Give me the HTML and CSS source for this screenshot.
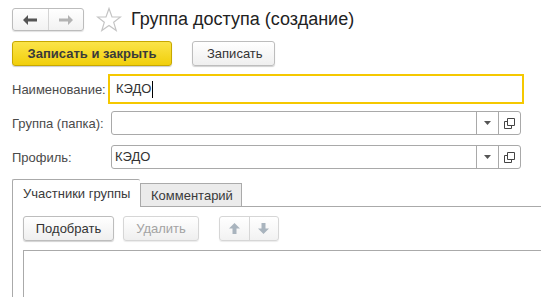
FILE: index.html
```html
<!DOCTYPE html>
<html lang="ru">
<head>
<meta charset="utf-8">
<title>Группа доступа (создание)</title>
<link rel="stylesheet" href="styles.css">
</head>
<body>
<div class="page">
  <div class="header">
    <div class="nav">
      <span class="nav-btn">
        <svg width="14" height="10" viewBox="0 0 14 10"><path d="M0 5 L5 0 L5 3.5 L14 3.5 L14 6.5 L5 6.5 L5 10 Z" fill="#555"/></svg>
      </span>
      <span class="nav-btn">
        <svg width="14" height="10" viewBox="0 0 14 10"><path d="M14 5 L9 0 L9 3.5 L0 3.5 L0 6.5 L9 6.5 L9 10 Z" fill="#b3b3b3"/></svg>
      </span>
    </div>
    <svg class="star" width="26" height="25" viewBox="0 0 26 25"><path d="M13 1.5 L16 10 L24.5 10 L17.7 15.3 L20.2 23.5 L13 18.5 L5.8 23.5 L8.3 15.3 L1.5 10 L10 10 Z" fill="none" stroke="#c4c4c4" stroke-width="1.2" stroke-linejoin="miter"/></svg>
    <h1 class="title">Группа доступа (создание)</h1>
  </div>

  <div class="toolbar">
    <button class="btn btn-default">Записать и закрыть</button>
    <button class="btn btn-plain">Записать</button>
  </div>

  <div class="form">
    <div class="row">
      <span class="label">Наименование:</span>
      <div class="field focused"><span class="value">КЭДО</span><span class="caret"></span></div>
    </div>
    <div class="row">
      <span class="label">Группа (папка):</span>
      <div class="field">
        <span class="value"></span>
        <span class="cell"><svg width="7" height="4" viewBox="0 0 7 4"><path d="M0 0 H7 L3.5 4 Z" fill="#555"/></svg></span>
        <span class="cell"><svg width="11" height="11" viewBox="0 0 11 11"><path d="M3.5 0.5 H10.5 V7.5 H3.5 Z" fill="none" stroke="#444"/><path d="M3.5 3.5 H0.5 V10.5 H7.5 V7.5" fill="none" stroke="#444"/></svg></span>
      </div>
    </div>
    <div class="row">
      <span class="label">Профиль:</span>
      <div class="field">
        <span class="value">КЭДО</span>
        <span class="cell"><svg width="7" height="4" viewBox="0 0 7 4"><path d="M0 0 H7 L3.5 4 Z" fill="#555"/></svg></span>
        <span class="cell"><svg width="11" height="11" viewBox="0 0 11 11"><path d="M3.5 0.5 H10.5 V7.5 H3.5 Z" fill="none" stroke="#444"/><path d="M3.5 3.5 H0.5 V10.5 H7.5 V7.5" fill="none" stroke="#444"/></svg></span>
      </div>
    </div>
  </div>

  <div class="tabs">
    <div class="tab active">Участники группы</div>
    <div class="tab">Комментарий</div>
    <div class="tab-rest"></div>
  </div>
  <div class="panel">
    <div class="panel-bar">
      <button class="btn btn-plain small">Подобрать</button>
      <button class="btn btn-plain small disabled">Удалить</button>
      <div class="arrows">
        <span class="arrow-btn"><svg width="11" height="11" viewBox="0 0 11 11"><path d="M5.5 0 L11 5.5 L7.5 5.5 L7.5 11 L3.5 11 L3.5 5.5 L0 5.5 Z" fill="#a9b4be"/></svg></span>
        <span class="arrow-btn"><svg width="11" height="11" viewBox="0 0 11 11"><path d="M5.5 11 L11 5.5 L7.5 5.5 L7.5 0 L3.5 0 L3.5 5.5 L0 5.5 Z" fill="#a9b4be"/></svg></span>
      </div>
    </div>
    <div class="table"></div>
  </div>
</div>
</body>
</html>
```

FILE: styles.css
```css
html, body {
  margin: 0;
  padding: 0;
  overflow: hidden;
  background: #fff;
}
body {
  font-family: "Liberation Sans", Arial, sans-serif;
  font-size: 13px;
  color: #333;
  width: 541px;
  height: 297px;
}
.page {
  padding: 8px 0 0 12px;
  display: flex;
  flex-direction: column;
  box-sizing: border-box;
  height: 297px;
}
.header {
  display: flex;
  align-items: center;
  height: 23px;
}
.nav {
  display: flex;
  width: 72px;
  height: 23px;
  box-sizing: border-box;
  border: 1px solid #bcbcbc;
  border-radius: 3px;
  background: linear-gradient(#ffffff, #f2f2f2);
  box-shadow: 0 1px 1px rgba(0,0,0,0.12);
}
.nav-btn {
  flex: 1;
  display: flex;
  align-items: center;
  justify-content: center;
}
.nav-btn + .nav-btn {
  border-left: 1px solid #d4d4d4;
}
.star {
  margin-left: 12px;
}
.title {
  margin: 0 0 0 9px;
  font-weight: normal;
  font-size: 18px;
  color: #222;
  line-height: 23px;
}
.toolbar {
  display: flex;
  gap: 20px;
  margin-top: 10px;
}
.btn {
  font-family: "Liberation Sans", Arial, sans-serif;
  font-size: 13px;
  height: 25px;
  box-sizing: border-box;
  border-radius: 3px;
  padding: 0 14px;
  color: #333;
  cursor: default;
  white-space: nowrap;
}
.btn-default {
  width: 160px;
  font-weight: bold;
  color: #3a3a3a;
  border: 1px solid #c7a800;
  background: linear-gradient(#fbe449, #f1cf0b);
  box-shadow: 0 1px 1px rgba(0,0,0,0.2);
}
.btn-plain {
  width: 83px;
  border: 1px solid #bdbdbd;
  background: linear-gradient(#ffffff, #efefef);
  box-shadow: 0 1px 1px rgba(0,0,0,0.18);
}
.form {
  display: flex;
  flex-direction: column;
  gap: 10px;
  margin-top: 11px;
}
.row {
  display: flex;
  align-items: center;
  height: 24px;
}
.label {
  width: 99px;
  color: #4a4a4a;
  white-space: nowrap;
}
.field {
  width: 410px;
  height: 24px;
  box-sizing: border-box;
  border: 1px solid #a9a9a9;
  border-radius: 3px;
  display: flex;
  align-items: stretch;
  background: #fff;
}
.field.focused {
  width: 416px;
  height: 30px;
  margin: -3px 0 -3px -3px;
  border: 2px solid #f5c800;
  border-radius: 0;
  padding-left: 3px;
}
.value {
  flex: 1;
  padding-left: 3px;
  line-height: 22px;
  color: #333;
}
.focused .value {
  flex: 0 0 auto;
  line-height: 26px;
}
.caret {
  width: 1px;
  height: 17px;
  background: #000;
  align-self: center;
  margin-left: 1px;
}
.cell {
  width: 21px;
  border-left: 1px solid #a9a9a9;
  display: flex;
  align-items: center;
  justify-content: center;
}
.tabs {
  display: flex;
  align-items: flex-end;
  margin-top: 10px;
  height: 28px;
}
.tab {
  box-sizing: border-box;
  border: 1px solid #aaaaaa;
  border-bottom: none;
  padding: 0 10px;
  display: flex;
  align-items: center;
  color: #3a3a3a;
  white-space: nowrap;
}
.tab.active {
  height: 28px;
  width: 128px;
  border-radius: 2px 2px 0 0;
  background: #fff;
  border-right: none;
  padding: 0 0 0 10px;
}
.tab:not(.active) {
  height: 24px;
  width: 102px;
  background: #ebebeb;
  border-bottom: 1px solid #aaaaaa;
}
.tab-rest {
  flex: 1;
  border-bottom: 1px solid #aaaaaa;
  height: 0;
}
.panel {
  flex: 1;
  display: flex;
  flex-direction: column;
  border-left: 1px solid #aaaaaa;
  padding: 9px 0 0 10px;
  min-height: 0;
}
.panel-bar {
  display: flex;
  align-items: center;
}
.btn.small {
  height: 25px;
  padding: 0;
}
.btn.small:first-child {
  width: 91px;
  margin-right: 9px;
}
.btn.disabled {
  width: 76px;
  color: #a3a3a3;
  border-color: #d6d6d6;
  box-shadow: 0 1px 1px rgba(0,0,0,0.08);
}
.arrows {
  margin-left: 20px;
  display: flex;
  width: 60px;
  height: 25px;
  box-sizing: border-box;
  border: 1px solid #d6d6d6;
  border-radius: 3px;
  background: linear-gradient(#ffffff, #f2f2f2);
  box-shadow: 0 1px 1px rgba(0,0,0,0.08);
}
.arrow-btn {
  flex: 1;
  display: flex;
  align-items: center;
  justify-content: center;
}
.arrow-btn + .arrow-btn {
  border-left: 1px solid #d6d6d6;
}
.table {
  flex: 1;
  margin-top: 9px;
  border-top: 1px solid #aaaaaa;
  border-left: 1px solid #aaaaaa;
}
```
